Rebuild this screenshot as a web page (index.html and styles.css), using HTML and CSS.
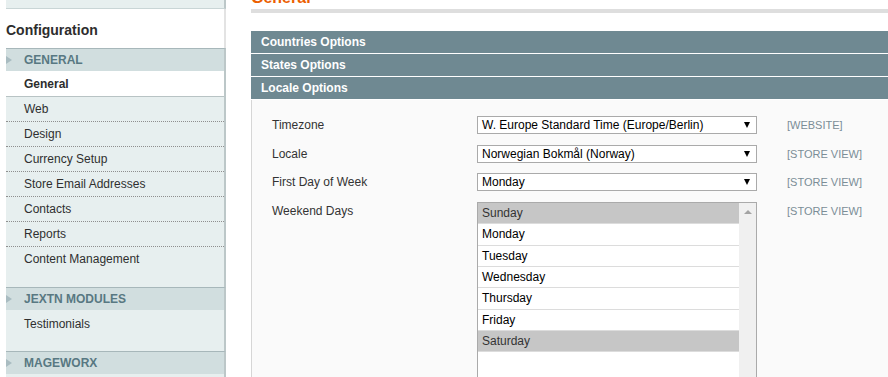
FILE: index.html
```html
<!DOCTYPE html>
<html lang="en">
<head>
    <meta charset="UTF-8">
    <title>Configuration - General</title>
    <link rel="stylesheet" href="styles.css">
</head>
<body>
    <div class="page">
        <aside class="side-col">
            <div class="side-top"></div>
            <h3 class="side-title">Configuration</h3>

            <div class="tab-head"><span class="arrow"></span>GENERAL</div>
            <ul class="tab-list">
                <li class="active">General</li>
                <li class="first">Web</li>
                <li>Design</li>
                <li>Currency Setup</li>
                <li>Store Email Addresses</li>
                <li>Contacts</li>
                <li>Reports</li>
                <li>Content Management</li>
            </ul>

            <div class="tab-head"><span class="arrow"></span>JEXTN MODULES</div>
            <ul class="tab-list">
                <li class="plain">Testimonials</li>
            </ul>

            <div class="tab-head"><span class="arrow"></span>MAGEWORX</div>
            <ul class="tab-list"></ul>
        </aside>

        <main class="main-col">
            <div class="content-header">
                <h3>General</h3>
            </div>

            <div class="section-head">Countries Options</div>
            <div class="section-head">States Options</div>
            <div class="section-head">Locale Options</div>

            <div class="fieldset">
                <div class="form-row">
                    <div class="label">Timezone</div>
                    <div class="select"><span>W. Europe Standard Time (Europe/Berlin)</span><span class="caret"></span></div>
                    <div class="scope">[WEBSITE]</div>
                </div>
                <div class="form-row">
                    <div class="label">Locale</div>
                    <div class="select"><span>Norwegian Bokmål (Norway)</span><span class="caret"></span></div>
                    <div class="scope">[STORE VIEW]</div>
                </div>
                <div class="form-row">
                    <div class="label">First Day of Week</div>
                    <div class="select"><span>Monday</span><span class="caret"></span></div>
                    <div class="scope">[STORE VIEW]</div>
                </div>
                <div class="form-row">
                    <div class="label">Weekend Days</div>
                    <div class="multiselect">
                        <ul class="options">
                            <li class="selected">Sunday</li>
                            <li>Monday</li>
                            <li>Tuesday</li>
                            <li>Wednesday</li>
                            <li>Thursday</li>
                            <li>Friday</li>
                            <li class="selected">Saturday</li>
                        </ul>
                        <div class="scrollbar"><span class="up"></span></div>
                    </div>
                    <div class="scope">[STORE VIEW]</div>
                </div>
            </div>
        </main>
    </div>
</body>
</html>
```

FILE: styles.css
```css
html, body {
    margin: 0;
    padding: 0;
    overflow: hidden;
}
body {
    font-family: "Liberation Sans", Arial, sans-serif;
    font-size: 12px;
    color: #2f2f2f;
    background-color: #fff;
}
.page {
    display: flex;
    align-items: flex-start;
    width: 888px;
    gap: 25px;
}

/* sidebar */
.side-col {
    width: 220px;
    margin-left: 6px;
    flex-shrink: 0;
}
.side-top {
    height: 8px;
    background-color: #e7efef;
    border-bottom: 1px solid #c9d5d6;
    border-right: 2px solid #bcc7c8;
}
.side-title {
    margin: 0;
    height: 39px;
    line-height: 43px;
    font-size: 14px;
    font-weight: bold;
    color: #2d2d2d;
    border-right: 2px solid #e3e3e3;
}
.tab-head {
    height: 22px;
    line-height: 22px;
    padding-left: 18px;
    position: relative;
    background-color: #d1dedf;
    border-top: 1px solid #a7b7ba;
    border-right: 2px solid #bcc7c8;
    color: #587882;
    font-weight: bold;
    font-size: 12px;
}
.tab-head:first-of-type {
    border-top-color: #c8d6d8;
}
.arrow {
    position: absolute;
    left: 0;
    top: 7px;
    width: 0;
    height: 0;
    border-top: 4px solid transparent;
    border-bottom: 4px solid transparent;
    border-left: 6px solid #a9bcc1;
}
.tab-list {
    list-style: none;
    margin: 0;
    padding: 0 0 16px;
    background-color: #e7efef;
    border-right: 2px solid #bcc7c8;
}
.tab-list li {
    height: 24px;
    line-height: 25px;
    padding-left: 18px;
    border-top: 1px dotted #8f8f8f;
    color: #2f2f2f;
}
.tab-list li.active {
    height: 25px;
    line-height: 27px;
    border-top: none;
    background-color: #fff;
    font-weight: bold;
    color: #2d2d2d;
}
.tab-list li.first {
    border-top: 1px solid #b8c3c4;
}
.tab-list li.plain {
    height: 25px;
    line-height: 28px;
    border-top: none;
}
.tab-list:last-child {
    height: 20px;
    padding: 0;
}

/* main column */
.main-col {
    flex: 1;
    min-width: 0;
}
.content-header {
    margin-top: -12px;
    border-bottom: 4px solid #dedede;
    margin-bottom: 18px;
}
.content-header h3 {
    margin: 0;
    padding-bottom: 1px;
    line-height: 20px;
    font-size: 16px;
    color: #eb5e00;
}
.section-head {
    height: 22px;
    line-height: 22px;
    padding-left: 10px;
    margin-bottom: 1px;
    background-color: #6f8992;
    color: #fff;
    font-weight: bold;
    font-size: 12px;
}
.section-head:last-of-type {
    margin-bottom: 0;
    border-bottom: 1px solid #d6d6d6;
}
.fieldset {
    background-color: #fafafa;
    border-left: 1px solid #d6d6d6;
    padding: 16px 0 0 20px;
    height: 300px;
}
.form-row {
    display: flex;
    align-items: flex-start;
    margin-bottom: 10.7px;
}
.label {
    width: 205px;
    line-height: 18px;
    color: #333;
}
.select {
    height: 16px;
    line-height: 16px;
    border: 1px solid #aaa;
    background-color: #fff;
    color: #000;
    padding: 0 0 0 4px;
    width: 274px;
    display: flex;
    justify-content: space-between;
    align-items: center;
}
.caret {
    width: 0;
    height: 0;
    margin-right: 6px;
    border-left: 3.5px solid transparent;
    border-right: 3.5px solid transparent;
    border-top: 6px solid #000;
}
.scope {
    margin-left: 30px;
    line-height: 18px;
    font-size: 11px;
    color: #7b8d97;
}
.multiselect {
    width: 278px;
    height: 200px;
    border: 1px solid #aaa;
    background-color: #fff;
    display: flex;
}
.options {
    list-style: none;
    margin: 0;
    padding: 0;
    flex: 1;
}
.options li {
    height: 20.3px;
    line-height: 21px;
    padding-left: 4px;
    border-bottom: 1px solid #dcdcdc;
    color: #000;
}
.options li.selected {
    background-color: #c6c6c6;
    color: #333;
}
.scrollbar {
    width: 17px;
    background-color: #f0f0f0;
    position: relative;
}
.up {
    position: absolute;
    left: 5px;
    top: 7px;
    width: 0;
    height: 0;
    border-left: 4px solid transparent;
    border-right: 4px solid transparent;
    border-bottom: 4px solid #a3a3a3;
}
```
